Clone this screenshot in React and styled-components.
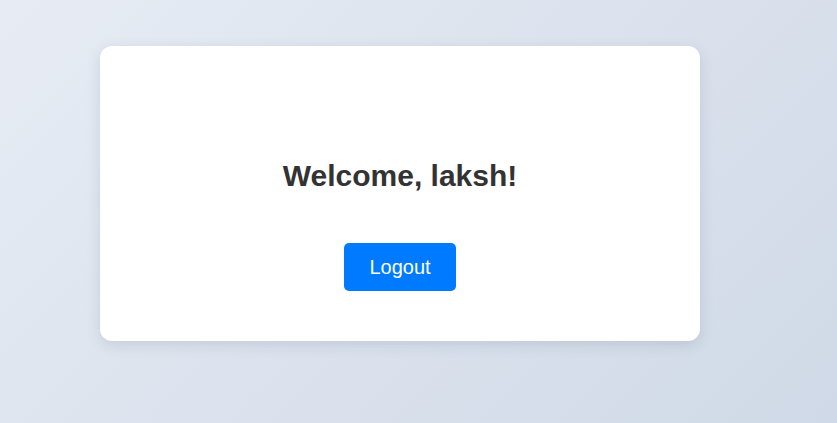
import React from 'react';
import styled, { createGlobalStyle } from 'styled-components';

const GlobalStyle = createGlobalStyle`
  html, body {
    margin: 0;
    padding: 0;
  }
  body {
    font-family: "Liberation Sans", Arial, sans-serif;
    background: linear-gradient(135deg, #e7ecf4 0%, #d0d9e7 100%);
    min-height: 100vh;
  }
`;

const Page = styled.div`
  min-height: 100vh;
  padding: 46px 0 0 100px;
  box-sizing: border-box;
`;

const Card = styled.div`
  width: 600px;
  height: 295px;
  box-sizing: border-box;
  background: #fff;
  border-radius: 12px;
  box-shadow: 0 4px 14px rgba(60, 75, 100, 0.15);
  display: flex;
  flex-direction: column;
  align-items: center;
  padding-top: 113px;
`;

const Heading = styled.h2`
  margin: 0 0 50px;
  font-size: 30px;
  font-weight: 700;
  color: #333;
`;

const LogoutButton = styled.button`
  font-family: "Liberation Sans", Arial, sans-serif;
  font-size: 20px;
  color: #fff;
  background: #007bff;
  border: none;
  border-radius: 5px;
  width: 112px;
  height: 48px;
  cursor: pointer;

  &:hover {
    background: #0069d9;
  }
`;

const App = () => {
  return (
    <Page>
      <GlobalStyle />
      <Card>
        <Heading>Welcome, laksh!</Heading>
        <LogoutButton>Logout</LogoutButton>
      </Card>
    </Page>
  );
};

export default App;
